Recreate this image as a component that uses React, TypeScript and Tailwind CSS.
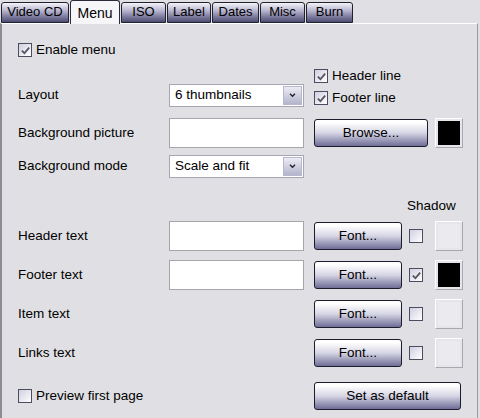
import React from "react";

const font = { fontFamily: '"Liberation Sans", Arial, sans-serif' };

type Tab = { label: string; w: number; active?: boolean };

const tabs: Tab[] = [
  { label: "Video CD", w: 68 },
  { label: "Menu", w: 50, active: true },
  { label: "ISO", w: 45 },
  { label: "Label", w: 44 },
  { label: "Dates", w: 47 },
  { label: "Misc", w: 45 },
  { label: "Burn", w: 47 },
];

function Check({ checked = false }: { checked?: boolean }) {
  return (
    <span className="relative inline-flex h-[14px] w-[14px] shrink-0 items-center justify-center border border-[#4c4c60] bg-gradient-to-br from-[#cfcfe0] to-[#ffffff]">
      {checked && (
        <svg viewBox="0 0 12 12" className="h-[11px] w-[11px]">
          <path d="M2 6.2 L4.8 9 L10 2.8" fill="none" stroke="#56565e" strokeWidth="2" />
        </svg>
      )}
    </span>
  );
}

function Btn({ label, w }: { label: string; w: number }) {
  return (
    <div
      className="flex h-[28px] shrink-0 items-center justify-center rounded-[3px] border border-[#1c1c2c] bg-gradient-to-b from-[#ffffff] from-10% via-[#d6d5e4] to-[#706e96] text-[13.5px] text-black"
      style={{ width: w }}
    >
      {label}
    </div>
  );
}

function Swatch({ filled = false }: { filled?: boolean }) {
  return (
    <div className="flex h-[30px] w-[28px] shrink-0 border border-t-white border-l-white border-r-[#a8a8ae] border-b-[#a8a8ae] bg-[#e6e6ea] p-[2px]">
      {filled ? <div className="flex-1 bg-black" /> : <div className="flex-1 bg-[#ebebef]" />}
    </div>
  );
}

function TextBox() {
  return <div className="h-[30px] w-[135px] shrink-0 border border-[#a6a6aa] bg-white" />;
}

function Select({ value }: { value: string }) {
  return (
    <div className="flex h-[23px] w-[135px] shrink-0 items-center border border-[#a6a6b4] bg-white">
      <span className="flex-1 pl-[5px] text-black">{value}</span>
      <span className="mr-[1px] flex h-[19px] w-[19px] items-center justify-center border border-[#b8b8cc] bg-gradient-to-b from-[#ececf4] to-[#b4b4cc]">
        <svg viewBox="0 0 8 6" className="h-[5px] w-[7px]">
          <path d="M1 1 L4 4 L7 1" fill="none" stroke="#202030" strokeWidth="1.6" />
        </svg>
      </span>
    </div>
  );
}

function FontRow({ label, input, checked, filled, mt }: { label: string; input?: boolean; checked?: boolean; filled?: boolean; mt: string }) {
  return (
    <div className={`flex h-[30px] items-center ${mt}`}>
      <span className="w-[151px] shrink-0">{label}</span>
      {input ? <TextBox /> : <div className="w-[135px] shrink-0" />}
      <div className="ml-[10px]">
        <Btn label="Font..." w={88} />
      </div>
      <div className="ml-[7px] flex">
        <Check checked={checked} />
      </div>
      <div className="ml-[12px]">
        <Swatch filled={filled} />
      </div>
    </div>
  );
}

export default function App() {
  return (
    <div className="h-[418px] w-[480px] overflow-hidden bg-[#e0e0e4] text-[13.5px] text-black" style={font}>
      {/* tab strip */}
      <div className="flex h-[23px] items-end gap-[1px] pl-[1px]">
        {tabs.map((t) =>
          t.active ? (
            <div
              key={t.label}
              className="relative z-10 -mb-[1px] flex h-[24px] items-start justify-center rounded-t-[3px] border border-b-0 border-[#2a2a3a] bg-[#f6f6f8] pt-[2px] text-[14px]"
              style={{ width: t.w }}
            >
              {t.label}
            </div>
          ) : (
            <div
              key={t.label}
              className="flex h-[21px] items-center justify-center rounded-t-[3px] border border-[#22222e] bg-gradient-to-b from-[#f4f4f8] via-[#b8b6d0] via-40% to-[#4e4b72] pb-[1px] text-[13px]"
              style={{ width: t.w }}
            >
              {t.label}
            </div>
          )
        )}
      </div>

      {/* panel */}
      <div className="h-[395px] w-[478px] border-t border-l-2 border-r border-t-white border-l-[#8c8c94] border-r-[#9a9aa0] pl-[16px]">
        <div className="mt-[19px] flex h-[14px] items-center gap-[4px]">
          <Check checked />
          <span>Enable menu</span>
        </div>

        <div className="mt-[11px] flex h-[39px]">
          <div className="flex w-[296px] items-end">
            <div className="flex h-[23px] items-center">
              <span className="w-[151px] shrink-0">Layout</span>
              <Select value="6 thumbnails" />
            </div>
          </div>
          <div className="flex flex-col gap-[8px] pt-[1px]">
            <div className="flex h-[14px] items-center gap-[4px]">
              <Check checked />
              <span>Header line</span>
            </div>
            <div className="flex h-[14px] items-center gap-[4px]">
              <Check checked />
              <span>Footer line</span>
            </div>
          </div>
        </div>

        <div className="mt-[11px] flex h-[30px] items-center">
          <span className="w-[151px] shrink-0">Background picture</span>
          <TextBox />
          <div className="ml-[10px]">
            <Btn label="Browse..." w={114} />
          </div>
          <div className="ml-[7px]">
            <Swatch filled />
          </div>
        </div>

        <div className="mt-[7px] flex h-[23px] items-center">
          <span className="w-[151px] shrink-0">Background mode</span>
          <Select value="Scale and fit" />
        </div>

        <div className="mt-[20px] flex h-[16px] items-center">
          <span className="ml-[389px]">Shadow</span>
        </div>

        <FontRow label="Header text" input mt="mt-[7px]" />
        <FontRow label="Footer text" input checked filled mt="mt-[9px]" />
        <FontRow label="Item text" mt="mt-[9px]" />
        <FontRow label="Links text" mt="mt-[9px]" />

        <div className="mt-[14px] flex h-[28px] items-center">
          <div className="flex w-[296px] items-center gap-[4px]">
            <Check />
            <span>Preview first page</span>
          </div>
          <Btn label="Set as default" w={147} />
        </div>
      </div>
    </div>
  );
}
